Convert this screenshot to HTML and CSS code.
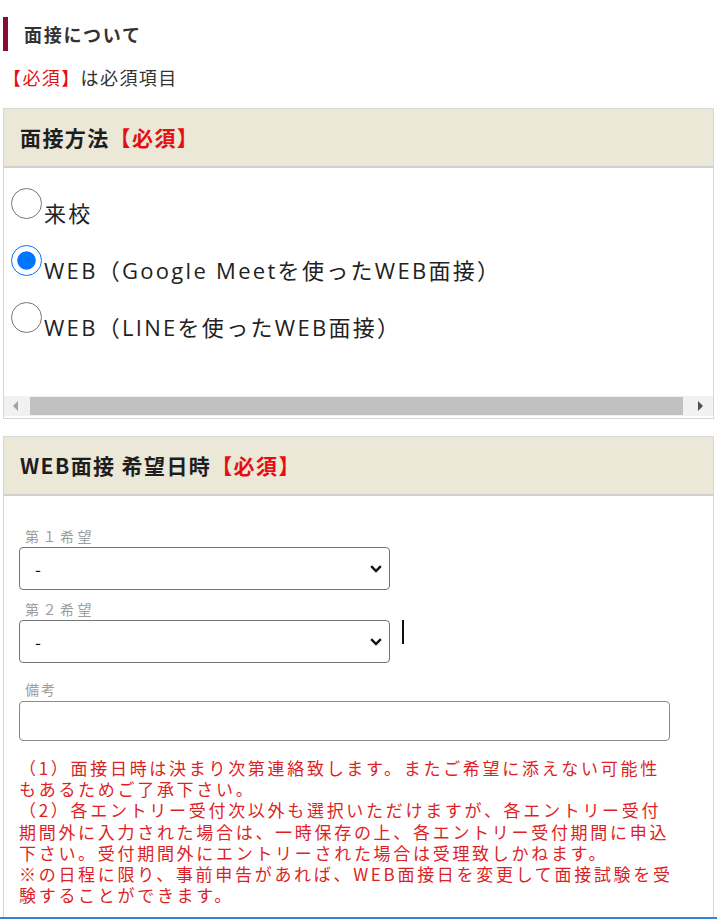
FILE: index.html
```html
<!DOCTYPE html>
<html lang="ja">
<head>
    <meta charset="utf-8">
    <title>面接について</title>
    <link rel="stylesheet" href="styles.css">
</head>
<body>

    <div class="page">
        <h2 class="title">面接について</h2>
        <p class="legend"><span class="req">【必須】</span>は必須項目</p>

        <section class="box">
            <div class="box-head">面接方法<span class="req">【必須】</span></div>
            <div class="radio-list">
                <label class="radio"><input type="radio" name="method"><span>来校</span></label>
                <label class="radio"><input type="radio" name="method" checked><span>WEB（Google Meetを使ったWEB面接）</span></label>
                <label class="radio"><input type="radio" name="method"><span>WEB（LINEを使ったWEB面接）</span></label>
            </div>
            <div class="hscroll">
                <span class="arrow arrow-left"></span>
                <span class="thumb"></span>
                <span class="arrow arrow-right"></span>
            </div>
        </section>

        <section class="box box-open">
            <div class="box-head">WEB面接 希望日時<span class="req">【必須】</span></div>
            <div class="box-body">
                <div class="field-label first">第１希望</div>
                <div class="select-row">
                    <div class="select-wrap">
                        <select><option>-</option></select>
                        <svg class="chevron" width="12" height="8" viewBox="0 0 12 8"><path d="M1.2 1.2 L6 6 L10.8 1.2" fill="none" stroke="#111" stroke-width="2.4"/></svg>
                    </div>
                </div>
                <div class="field-label">第２希望</div>
                <div class="select-row">
                    <div class="select-wrap">
                        <select><option>-</option></select>
                        <svg class="chevron" width="12" height="8" viewBox="0 0 12 8"><path d="M1.2 1.2 L6 6 L10.8 1.2" fill="none" stroke="#111" stroke-width="2.4"/></svg>
                    </div>
                    <span class="caret"></span>
                </div>
                <div class="field-label note-label">備考</div>
                <input class="text-input" type="text">
                <p class="notes">
                    （1）面接日時は決まり次第連絡致します。またご希望に添えない可能性もあるためご了承下さい。<br>
                    （2）各エントリー受付次以外も選択いただけますが、各エントリー受付期間外に入力された場合は、一時保存の上、各エントリー受付期間に申込下さい。受付期間外にエントリーされた場合は受理致しかねます。<br>
                    ※の日程に限り、事前申告があれば、WEB面接日を変更して面接試験を受験することができます。
                </p>
            </div>
        </section>
    </div>
    <div class="focus-line"></div>

</body>
</html>
```

FILE: styles.css
```css
* {
    margin: 0;
    padding: 0;
    box-sizing: border-box;
}

body {
    font-family: "Noto Sans CJK JP", "Liberation Sans", sans-serif;
    color: #222222;
    background: #ffffff;
    width: 717px;
    overflow: hidden;
}

.page {
    padding: 0 3px;
}

.title {
    margin-top: 17px;
    height: 34px;
    line-height: 34px;
    border-left: 5px solid #8a0c30;
    padding-left: 16px;
    font-size: 18px;
    font-weight: bold;
    letter-spacing: 1.7px;
    color: #333333;
}

.legend {
    margin-top: 14px;
    line-height: 24px;
    font-size: 18px;
    letter-spacing: 1.4px;
    color: #333333;
}

.req {
    color: #e50f12;
}

.box {
    margin-top: 19px;
    border: 1px solid #d6d6d6;
}

.box + .box {
    margin-top: 17px;
}

.box-open {
    border-bottom: none;
}

.box-head {
    height: 59px;
    line-height: 57px;
    padding-left: 16px;
    background: #ece8d8;
    border-bottom: 2px solid #d0d0d0;
    font-size: 21px;
    font-weight: bold;
    letter-spacing: 1.4px;
    color: #1e1e1e;
}

.radio-list {
    padding: 20px 7px 0;
}

.radio {
    display: flex;
    align-items: flex-start;
    height: 57px;
    font-family: "Open Sans", "Noto Sans CJK JP", sans-serif;
    font-size: 22px;
    letter-spacing: 2.3px;
    color: #222222;
    cursor: pointer;
}

.radio input {
    width: 31px;
    height: 31px;
    margin: 0 2px 0 0;
    flex: none;
}

.radio span {
    margin-top: 11px;
    line-height: 28px;
}

.hscroll {
    display: flex;
    align-items: center;
    height: 20px;
    margin-top: 37px;
    margin-bottom: 2px;
    background: #f1f1f1;
}

.arrow {
    display: flex;
    align-items: center;
    justify-content: center;
    height: 20px;
}

.arrow::before {
    content: "";
    border-top: 5px solid transparent;
    border-bottom: 5px solid transparent;
}

.arrow-left {
    width: 22px;
}

.arrow-left::before {
    border-right: 5px solid #a3a3a3;
}

.arrow-right {
    width: 26px;
}

.arrow-right::before {
    border-left: 5px solid #505050;
}

.thumb {
    flex: 1;
    height: 18px;
    margin: 0 4px;
    background: #c1c1c1;
}

.box-body {
    padding: 31px 15px 12px;
}

.field-label {
    height: 18px;
    line-height: 18px;
    margin-top: 10px;
    margin-bottom: 2px;
    padding-left: 6px;
    font-size: 14px;
    letter-spacing: 3.5px;
    color: #9d9d9d;
}

.field-label.first {
    margin-top: 0;
}

.field-label.note-label {
    margin-top: 17px;
    margin-bottom: 3px;
    letter-spacing: 2px;
}

.select-row {
    display: flex;
    align-items: flex-start;
}

.select-wrap {
    position: relative;
    width: 371px;
}

.select-wrap select {
    display: block;
    width: 100%;
    height: 43px;
    padding-left: 15px;
    border: 1px solid #767676;
    border-radius: 4px;
    background: #ffffff;
    font-family: inherit;
    font-size: 17px;
    color: #111111;
    appearance: none;
    -webkit-appearance: none;
}

.chevron {
    position: absolute;
    right: 8px;
    top: 18px;
}

.caret {
    width: 2px;
    height: 24px;
    margin-left: 12px;
    background: #111111;
}

.text-input {
    display: block;
    width: 651px;
    height: 40px;
    border: 1px solid #8a8a8a;
    border-radius: 4px;
    background: #ffffff;
}

.notes {
    width: 660px;
    margin-top: 16px;
    font-size: 17px;
    letter-spacing: 2.7px;
    line-height: 21.2px;
    color: #dd1f26;
}

.focus-line {
    height: 2px;
    background: #3a7fd6;
}
```
